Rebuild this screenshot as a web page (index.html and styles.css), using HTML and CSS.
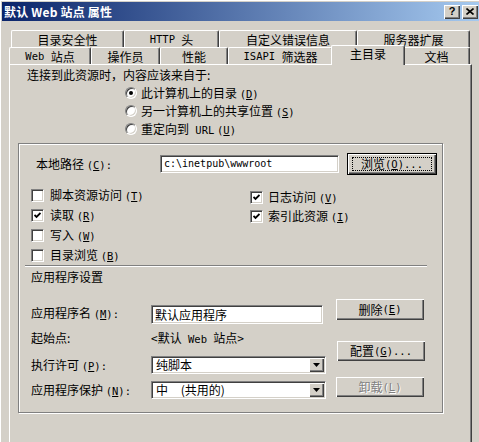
FILE: index.html
```html
<!DOCTYPE html>
<html>
<head>
<meta charset="utf-8">
<link rel="stylesheet" href="styles.css">
</head>
<body>
<div class="win">
  <div class="titlebar">
    <span class="title">默认 Web 站点 属性</span>
    <span class="capbtns">
      <span class="cbtn q">?</span>
      <span class="cbtn"><svg width="8" height="7" viewBox="0 0 8 7"><path d="M0.5 0.5 L7.5 6.5 M7.5 0.5 L0.5 6.5" stroke="#000" stroke-width="1.6"/></svg></span>
    </span>
  </div>

  <div class="tabs">
    <div class="tabrow back">
      <div class="tab t1">目录安全性</div>
      <div class="tab t2"><span class="en">HTTP&nbsp;</span>头</div>
      <div class="tab t3">自定义错误信息</div>
      <div class="tab t4">服务器扩展</div>
    </div>
    <div class="tabrow front">
      <div class="tab f1"><span class="en">Web&nbsp;</span>站点</div>
      <div class="tab f2">操作员</div>
      <div class="tab f3">性能</div>
      <div class="tab f4"><span class="en">ISAPI&nbsp;</span>筛选器</div>
      <div class="tab f5 sel">主目录</div>
      <div class="tab f6">文档</div>
    </div>
  </div>

  <div class="panel">
    <p class="lead">连接到此资源时，内容应该来自于:</p>
    <div class="radios">
      <div class="opt"><span class="radio on"></span><span>此计算机上的目录 <span class="en">(<u>D</u>)</span></span></div>
      <div class="opt"><span class="radio"></span><span>另一计算机上的共享位置 <span class="en">(<u>S</u>)</span></span></div>
      <div class="opt"><span class="radio"></span><span>重定向到<span class="en">&nbsp;URL</span> <span class="en">(<u>U</u>)</span></span></div>
    </div>

    <div class="group">
      <div class="pathrow">
        <span class="plabel">本地路径 <span class="en">(<u>C</u>):</span></span>
        <div class="field en">c:\inetpub\wwwroot</div>
        <div class="btn def"><span class="focus">浏览 <span class="en">(<u>O</u>)...</span></span></div>
      </div>

      <div class="checks">
        <div class="col cl">
          <div class="chk"><span class="box"></span><span>脚本资源访问 <span class="en">(<u>T</u>)</span></span></div>
          <div class="chk"><span class="box on"><svg width="7" height="7" viewBox="0 0 7 7"><polyline points="0.5,3 2.5,5 6.5,1" fill="none" stroke="#000" stroke-width="1.8"/></svg></span><span>读取 <span class="en">(<u>R</u>)</span></span></div>
          <div class="chk"><span class="box"></span><span>写入 <span class="en">(<u>W</u>)</span></span></div>
          <div class="chk"><span class="box"></span><span>目录浏览 <span class="en">(<u>B</u>)</span></span></div>
        </div>
        <div class="col cr">
          <div class="chk"><span class="box on"><svg width="7" height="7" viewBox="0 0 7 7"><polyline points="0.5,3 2.5,5 6.5,1" fill="none" stroke="#000" stroke-width="1.8"/></svg></span><span>日志访问 <span class="en">(<u>V</u>)</span></span></div>
          <div class="chk"><span class="box on"><svg width="7" height="7" viewBox="0 0 7 7"><polyline points="0.5,3 2.5,5 6.5,1" fill="none" stroke="#000" stroke-width="1.8"/></svg></span><span>索引此资源 <span class="en">(<u>I</u>)</span></span></div>
        </div>
      </div>

      <div class="sep"></div>
      <div class="sect">应用程序设置</div>

      <div class="app">
        <div class="appgrid">
          <div class="lbl r1">应用程序名 <span class="en">(<u>M</u>):</span></div>
          <div class="field name">默认应用程序</div>
          <div class="lbl r2">起始点:</div>
          <div class="val r2">&lt;默认<span class="en">&nbsp;Web&nbsp;</span>站点&gt;</div>
          <div class="lbl r3">执行许可 <span class="en">(<u>P</u>):</span></div>
          <div class="select r3"><span class="stext">纯脚本</span><span class="drop"><svg width="7" height="4" viewBox="0 0 7 4"><polygon points="0,0 7,0 3.5,4" fill="#000"/></svg></span></div>
          <div class="lbl r4">应用程序保护 <span class="en">(<u>N</u>):</span></div>
          <div class="select r4"><span class="stext">中<span class="en">&nbsp;&nbsp;</span>(共用的)</span><span class="drop"><svg width="7" height="4" viewBox="0 0 7 4"><polygon points="0,0 7,0 3.5,4" fill="#000"/></svg></span></div>
        </div>
        <div class="appbtns">
          <div class="btn b1">删除 <span class="en">(<u>E</u>)</span></div>
          <div class="btn b2">配置 <span class="en">(<u>G</u>)...</span></div>
          <div class="btn b3 dis">卸载 <span class="en">(<u>L</u>)</span></div>
        </div>
      </div>
    </div>
  </div>
</div>
</body>
</html>
```

FILE: styles.css
```css
* { box-sizing: border-box; margin: 0; padding: 0; }

html, body {
  width: 479px;
  height: 442px;
  overflow: hidden;
  background: #d4d0c8;
}

body {
  font: 12px/1 "Noto Sans CJK SC", sans-serif;
  color: #000;
}

.en {
  font-family: "DejaVu Sans Mono", "Liberation Mono", monospace;
  font-size: 10.5px;
}

u { text-decoration: underline; text-underline-offset: 1px; }

.win {
  width: 484px;
  height: 442px;
  padding-top: 2px;
  box-shadow: inset 1px 1px 0 #fff;
}

/* title bar */
.titlebar {
  margin-left: 2px;
  width: 480px;
  height: 19px;
  background: linear-gradient(to right, #0a246a, #a6caf0);
  display: flex;
  align-items: center;
  justify-content: space-between;
  padding: 0 4px 0 2px;
}

.title {
  color: #fff;
  font-weight: bold;
  font-size: 12px;
  letter-spacing: 0.2px;
}

.capbtns { display: flex; gap: 2px; }

.cbtn {
  width: 16px;
  height: 14px;
  background: #d4d0c8;
  box-shadow: inset 1px 1px 0 #fff, inset -1px -1px 0 #404040, inset -2px -2px 0 #808080;
  display: flex;
  align-items: center;
  justify-content: center;
  font: bold 11px/1 "Liberation Sans", sans-serif;
}

/* tabs */
.tabs { margin-top: 9px; height: 34px; }

.tabrow { display: flex; height: 17px; }
.tabrow.back { margin-left: 11px; }
.tabrow.front { margin-left: 9px; }

.tab {
  height: 17px;
  border-top: 1px solid #fff;
  border-left: 1px solid #fff;
  border-right: 1px solid #404040;
  box-shadow: inset -1px 0 0 #808080;
  border-radius: 2px 2px 0 0;
  background: #d4d0c8;
  display: flex;
  align-items: center;
  justify-content: center;
  padding-top: 1px;
  white-space: nowrap;
}

.t1 { width: 113px; }
.t2 { width: 95px; }
.t3 { width: 138px; }
.t4 { width: 113px; }
.f1 { width: 82px; }
.f2 { width: 69px; }
.f3 { width: 68px; }
.f4 { width: 105px; }
.f5 { width: 70px; }
.f6 { width: 67px; }

.tab.sel {
  position: relative;
  z-index: 2;
  width: 74px;
  height: 20px;
  margin: -2px -2px 0;
  align-items: flex-start;
  padding-top: 2px;
}

/* panel */
.panel {
  margin-left: 9px;
  width: 463px;
  height: 378px;
  border-top: 1px solid #fff;
  border-left: 1px solid #fff;
  border-right: 1px solid #404040;
  box-shadow: inset -1px 0 0 #808080;
}

.lead {
  margin-left: 17px;
  padding-top: 1px;
  height: 19px;
  line-height: 18px;
}

.radios { margin-left: 115px; }

.opt {
  height: 18px;
  display: flex;
  align-items: center;
  gap: 4px;
  white-space: nowrap;
}

.radio {
  width: 12px;
  height: 12px;
  border-radius: 50%;
  background: #fff;
  border: 1px solid;
  border-color: #808080 #fff #fff #808080;
  box-shadow: inset 1px 1px 0 #404040, inset -1px -1px 0 #d4d0c8;
  display: flex;
  align-items: center;
  justify-content: center;
}

.radio.on::after {
  content: "";
  width: 4px;
  height: 4px;
  border-radius: 50%;
  background: #000;
}

/* group */
.group {
  margin: 5px 0 0 8px;
  width: 425px;
  height: 270px;
  border: 1px solid #808080;
  box-shadow: 1px 1px 0 #fff, inset 1px 1px 0 #fff;
}

.pathrow {
  margin-top: 9px;
  height: 22px;
  display: flex;
  align-items: center;
  padding-left: 17px;
}

.plabel { width: 124px; white-space: nowrap; }

.field {
  height: 18px;
  background: #fff;
  border: 1px solid;
  border-color: #808080 #fff #fff #808080;
  box-shadow: inset 1px 1px 0 #404040, inset -1px -1px 0 #d4d0c8;
  display: flex;
  align-items: center;
  padding-left: 3px;
  white-space: nowrap;
}

.pathrow .field { width: 179px; font-size: 10px; }

.btn {
  background: #d4d0c8;
  box-shadow: inset 1px 1px 0 #fff, inset -1px -1px 0 #404040, inset -2px -2px 0 #808080;
  display: flex;
  align-items: center;
  justify-content: center;
  white-space: nowrap;
}

.btn.def {
  margin-left: 8px;
  width: 90px;
  height: 22px;
  border: 1px solid #000;
  padding: 3px 4px;
}

.focus {
  flex: 1;
  align-self: stretch;
  border: 1px dotted #000;
  display: flex;
  align-items: center;
  justify-content: center;
}

/* checkboxes */
.checks {
  margin-top: 10px;
  height: 80px;
  display: flex;
}

.col.cl { margin-left: 12px; width: 219px; }
.col.cr { padding-top: 3px; }

.chk {
  height: 20px;
  display: flex;
  align-items: center;
  gap: 6px;
  white-space: nowrap;
}
.cr .chk { height: 19px; gap: 5px; }

.box {
  width: 13px;
  height: 13px;
  background: #fff;
  border: 1px solid;
  border-color: #808080 #fff #fff #808080;
  box-shadow: inset 1px 1px 0 #404040, inset -1px -1px 0 #d4d0c8;
  display: flex;
  align-items: center;
  justify-content: center;
}

.sep {
  margin-left: 6px;
  width: 402px;
  height: 2px;
  border-top: 1px solid #808080;
  border-bottom: 1px solid #fff;
}

.sect {
  padding-left: 12px;
  height: 20px;
  line-height: 20px;
}

/* application section */
.app {
  display: flex;
  padding-left: 12px;
}

.appgrid {
  width: 295px;
  padding-top: 18px;
  display: grid;
  grid-template-columns: 120px 175px;
  grid-template-rows: 19px 32px 25px 18px;
  align-items: start;
}

.lbl, .val { white-space: nowrap; }
.lbl.r1 { line-height: 16px; }
.lbl.r2, .val.r2 { line-height: 28px; }
.lbl.r3, .lbl.r4 { line-height: 18px; }

.field.name { width: 172px; height: 19px; }

.select {
  width: 175px;
  height: 18px;
  background: #fff;
  border: 1px solid;
  border-color: #808080 #fff #fff #808080;
  box-shadow: inset 1px 1px 0 #404040, inset -1px -1px 0 #d4d0c8;
  display: flex;
  align-items: center;
  padding: 1px 1px 1px 4px;
}

.stext { flex: 1; white-space: nowrap; }

.drop {
  width: 15px;
  height: 14px;
  background: #d4d0c8;
  box-shadow: inset 1px 1px 0 #fff, inset -1px -1px 0 #404040, inset -2px -2px 0 #808080;
  display: flex;
  align-items: center;
  justify-content: center;
}

.appbtns {
  margin-left: 10px;
  padding-top: 12px;
  display: flex;
  flex-direction: column;
}

.appbtns .btn { width: 88px; height: 20px; }
.appbtns .b1 { height: 21px; }
.appbtns .b2 { margin-top: 21px; margin-left: 1px; }
.appbtns .b3 { margin-top: 16px; }

.btn.dis { color: #808080; text-shadow: 1px 1px 0 #fff; }
```
